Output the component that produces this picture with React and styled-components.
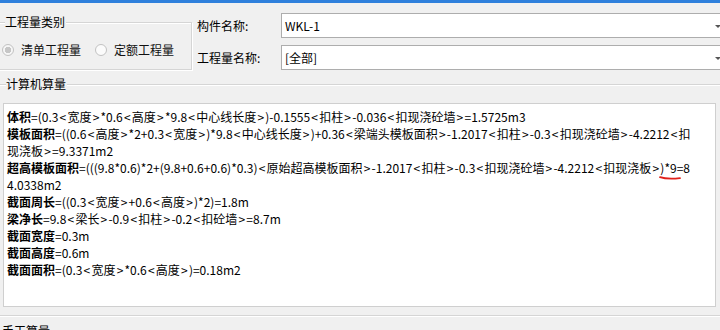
import React from 'react'
import styled, { createGlobalStyle } from 'styled-components'

const GlobalStyle = createGlobalStyle`
  html, body {
    margin: 0;
    padding: 0;
    background: #f0f0f0;
    overflow: hidden;
  }
  body {
    font-family: 'Microsoft YaHei', 'Noto Sans CJK SC', 'Noto Sans', sans-serif;
    font-size: 12px;
    color: #000;
  }
`

const entries = [
  { label: '体积', lines: ['=(0.3<宽度>*0.6<高度>*9.8<中心线长度>)-0.1555<扣柱>-0.036<扣现浇砼墙>=1.5725m3'] },
  {
    label: '模板面积',
    lines: [
      '=((0.6<高度>*2+0.3<宽度>)*9.8<中心线长度>)+0.36<梁端头模板面积>-1.2017<扣柱>-0.3<扣现浇砼墙>-4.2212<扣',
      '现浇板>=9.3371m2',
    ],
  },
  {
    label: '超高模板面积',
    lines: [
      '=(((9.8*0.6)*2+(9.8+0.6+0.6)*0.3)<原始超高模板面积>-1.2017<扣柱>-0.3<扣现浇砼墙>-4.2212<扣现浇板>',
      '4.0338m2',
    ],
    mark: ')*9',
    tail: '=8',
  },
  { label: '截面周长', lines: ['=((0.3<宽度>+0.6<高度>)*2)=1.8m'] },
  { label: '梁净长', lines: ['=9.8<梁长>-0.9<扣柱>-0.2<扣砼墙>=8.7m'] },
  { label: '截面宽度', lines: ['=0.3m'] },
  { label: '截面高度', lines: ['=0.6m'] },
  { label: '截面面积', lines: ['=(0.3<宽度>*0.6<高度>)=0.18m2'] },
]

// the angle brackets sit with extra room around them in the original font
const Formula = ({ text }) =>
  text.split(/([<>])/).map((part, i) =>
    part === '<' || part === '>' ? <Bracket key={i}>{part}</Bracket> : part
  )

export default function App() {
  return (
    <>
      <GlobalStyle />
      <TitleBar />
      <TopRow>
        <CategoryGroup>
          <Legend>工程量类别</Legend>
          <RadioRow>
            <Radio>
              <RadioDot $checked />
              清单工程量
            </Radio>
            <Radio>
              <RadioDot />
              定额工程量
            </Radio>
          </RadioRow>
        </CategoryGroup>
        <Fields>
          <FieldLabel>构件名称:</FieldLabel>
          <Combo>
            WKL-1
            <Arrow />
          </Combo>
          <FieldLabel>工程量名称:</FieldLabel>
          <Combo>
            [全部]
            <Arrow />
          </Combo>
        </Fields>
      </TopRow>

      <ComputedGroup>
        <Legend>计算机算量</Legend>
        <FormulaBox>
          {entries.map((e) => (
            <Entry key={e.label}>
              <b>{e.label}</b>
              <Formula text={e.lines[0]} />
              {e.mark && (
                <Marked>
                  {e.mark}
                  <Squiggle viewBox="0 0 22 4" width="22" height="4">
                    <path d="M1 1.2 Q 8 3.6 21 2.2" fill="none" stroke="#e0201a" strokeWidth="1.8" strokeLinecap="round" />
                  </Squiggle>
                </Marked>
              )}
              {e.tail}
              {e.lines.slice(1).map((l) => (
                <React.Fragment key={l}>
                  <br />
                  <Formula text={l} />
                </React.Fragment>
              ))}
            </Entry>
          ))}
        </FormulaBox>
      </ComputedGroup>

      <ManualGroup>
        <Legend>手工算量</Legend>
      </ManualGroup>
    </>
  )
}

const TitleBar = styled.div`
  height: 3px;
  background: #2f80dc;
`

const TopRow = styled.div`
  display: flex;
  align-items: flex-start;
`

const Group = styled.fieldset`
  margin: 0;
  padding: 0;
  min-width: 0;
  border: 1px solid #d5d5d5;
  box-shadow: 1px 1px 0 #fff, inset 1px 1px 0 #fff;
`

const Legend = styled.legend`
  padding: 0 1px 0 0;
  margin-left: 3px;
  line-height: 16px;
  font-size: 12px;
  background: #f0f0f0;
  color: #000;
`

const CategoryGroup = styled(Group)`
  margin: 11px 0 0 -2px;
  width: 194px;
  box-sizing: border-box;
  padding: 12px 0 11px 3px;
`

const RadioRow = styled.div`
  display: flex;
  align-items: center;
  gap: 14px;
  height: 16px;
`

const Radio = styled.label`
  display: flex;
  align-items: center;
  gap: 7px;
  line-height: 16px;
  color: #111;
`

const RadioDot = styled.span`
  width: 12px;
  height: 12px;
  box-sizing: border-box;
  border-radius: 50%;
  border: 1px solid #c2c2c2;
  background: ${(p) => (p.$checked ? 'radial-gradient(circle, #c6c6c6 0 3px, #f6f6f6 3.5px)' : '#fbfbfb')};
`

const Fields = styled.div`
  flex: 1;
  margin: 10px -8px 0 5px;
  display: grid;
  grid-template-columns: 84px 1fr;
  row-gap: 7px;
  align-items: center;
`

const FieldLabel = styled.span`
  line-height: 16px;
`

const Combo = styled.div`
  position: relative;
  height: 25px;
  box-sizing: border-box;
  border: 1px solid #adadad;
  background: #fff;
  padding: 0 3px;
  display: flex;
  align-items: center;
`

const Arrow = styled.span`
  position: absolute;
  right: 6px;
  top: 11px;
  border-left: 3px solid transparent;
  border-right: 3px solid transparent;
  border-top: 3px solid #555;
`

const ComputedGroup = styled(Group)`
  margin: 6px -6px 0 -2px;
  padding: 11px 6px 8px 4px;
`

const FormulaBox = styled.div`
  height: 204px;
  box-sizing: border-box;
  background: #fff;
  border: 1px solid #cfcfcf;
  padding: 4px 3px;
  width: 713px;
  overflow: hidden;
`

const Entry = styled.div`
  line-height: 17px;
  white-space: nowrap;

  b {
    font-weight: 700;
  }
`

const Bracket = styled.span`
  margin: 0 1.2px;
`

const Marked = styled.span`
  position: relative;
  display: inline-block;
`

const Squiggle = styled.svg`
  position: absolute;
  left: -1px;
  top: 17px;
`

const ManualGroup = styled(Group)`
  margin: 7px -6px 0 -2px;
  padding: 0;
  height: 40px;
`
